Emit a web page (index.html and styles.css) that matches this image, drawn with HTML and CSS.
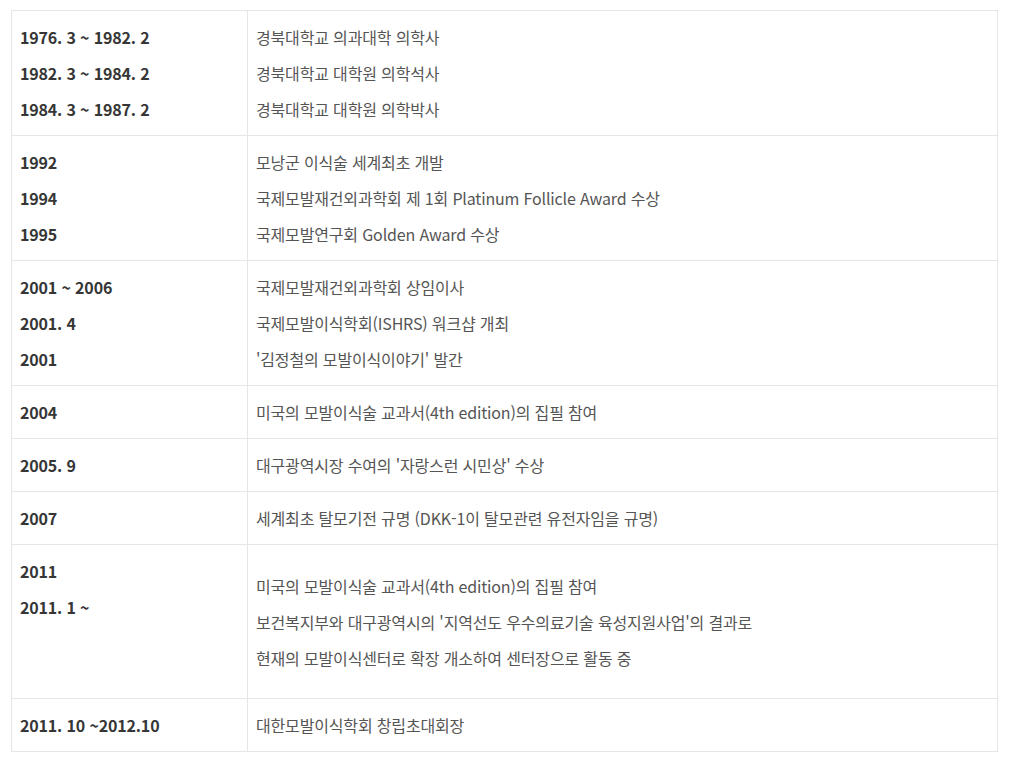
FILE: index.html
```html
<!DOCTYPE html>
<html lang="ko">
<head>
<meta charset="utf-8">
<link rel="stylesheet" href="styles.css">
</head>
<body>
<div class="wrap">
<table class="history">
  <colgroup><col class="c-date"><col class="c-text"></colgroup>
  <tbody>
    <tr>
      <td class="date"><p>1976. 3 ~ 1982. 2</p><p>1982. 3 ~ 1984. 2</p><p>1984. 3 ~ 1987. 2</p></td>
      <td class="desc"><p>경북대학교 의과대학 의학사</p><p>경북대학교 대학원 의학석사</p><p>경북대학교 대학원 의학박사</p></td>
    </tr>
    <tr>
      <td class="date"><p>1992</p><p>1994</p><p>1995</p></td>
      <td class="desc"><p>모낭군 이식술 세계최초 개발</p><p>국제모발재건외과학회 제 1회 Platinum Follicle Award 수상</p><p>국제모발연구회 Golden Award 수상</p></td>
    </tr>
    <tr>
      <td class="date"><p>2001 ~ 2006</p><p>2001. 4</p><p>2001</p></td>
      <td class="desc"><p>국제모발재건외과학회 상임이사</p><p>국제모발이식학회(ISHRS) 워크샵 개최</p><p>'김정철의 모발이식이야기' 발간</p></td>
    </tr>
    <tr>
      <td class="date"><p>2004</p></td>
      <td class="desc"><p>미국의 모발이식술 교과서(4th edition)의 집필 참여</p></td>
    </tr>
    <tr>
      <td class="date"><p>2005. 9</p></td>
      <td class="desc"><p>대구광역시장 수여의 '자랑스런 시민상' 수상</p></td>
    </tr>
    <tr>
      <td class="date"><p>2007</p></td>
      <td class="desc"><p>세계최초 탈모기전 규명 (DKK-1이 탈모관련 유전자임을 규명)</p></td>
    </tr>
    <tr class="tall">
      <td class="date"><p>2011</p><p>2011. 1 ~</p></td>
      <td class="desc middle"><p>미국의 모발이식술 교과서(4th edition)의 집필 참여</p><p>보건복지부와 대구광역시의 '지역선도 우수의료기술 육성지원사업'의 결과로</p><p>현재의 모발이식센터로 확장 개소하여 센터장으로 활동 중</p></td>
    </tr>
    <tr>
      <td class="date"><p>2011. 10 ~2012.10</p></td>
      <td class="desc"><p>대한모발이식학회 창립초대회장</p></td>
    </tr>
  </tbody>
</table>
</div>
</body>
</html>
```

FILE: styles.css
```css
html, body {
  margin: 0;
  padding: 0;
  background: #ffffff;
}
body {
  font-family: "Noto Sans CJK KR", "Noto Sans", sans-serif;
  font-size: 16px;
  letter-spacing: -0.01em;
  color: #555555;
}
.wrap {
  padding: 10px 0 0 11px;
}
.history {
  border-collapse: collapse;
  width: 987px;
  table-layout: fixed;
}
.c-date { width: 236px; }
.history td {
  border: 1px solid #e6e6e6;
  padding: 8px 8px;
  vertical-align: top;
  line-height: 36px;
}
.history p {
  margin: 0;
  white-space: nowrap;
}
.date {
  font-weight: 700;
  color: #363636;
}
.desc {
  color: #555555;
}
.tall td {
  height: 137px;
}
.history td.middle {
  vertical-align: middle;
}
```
